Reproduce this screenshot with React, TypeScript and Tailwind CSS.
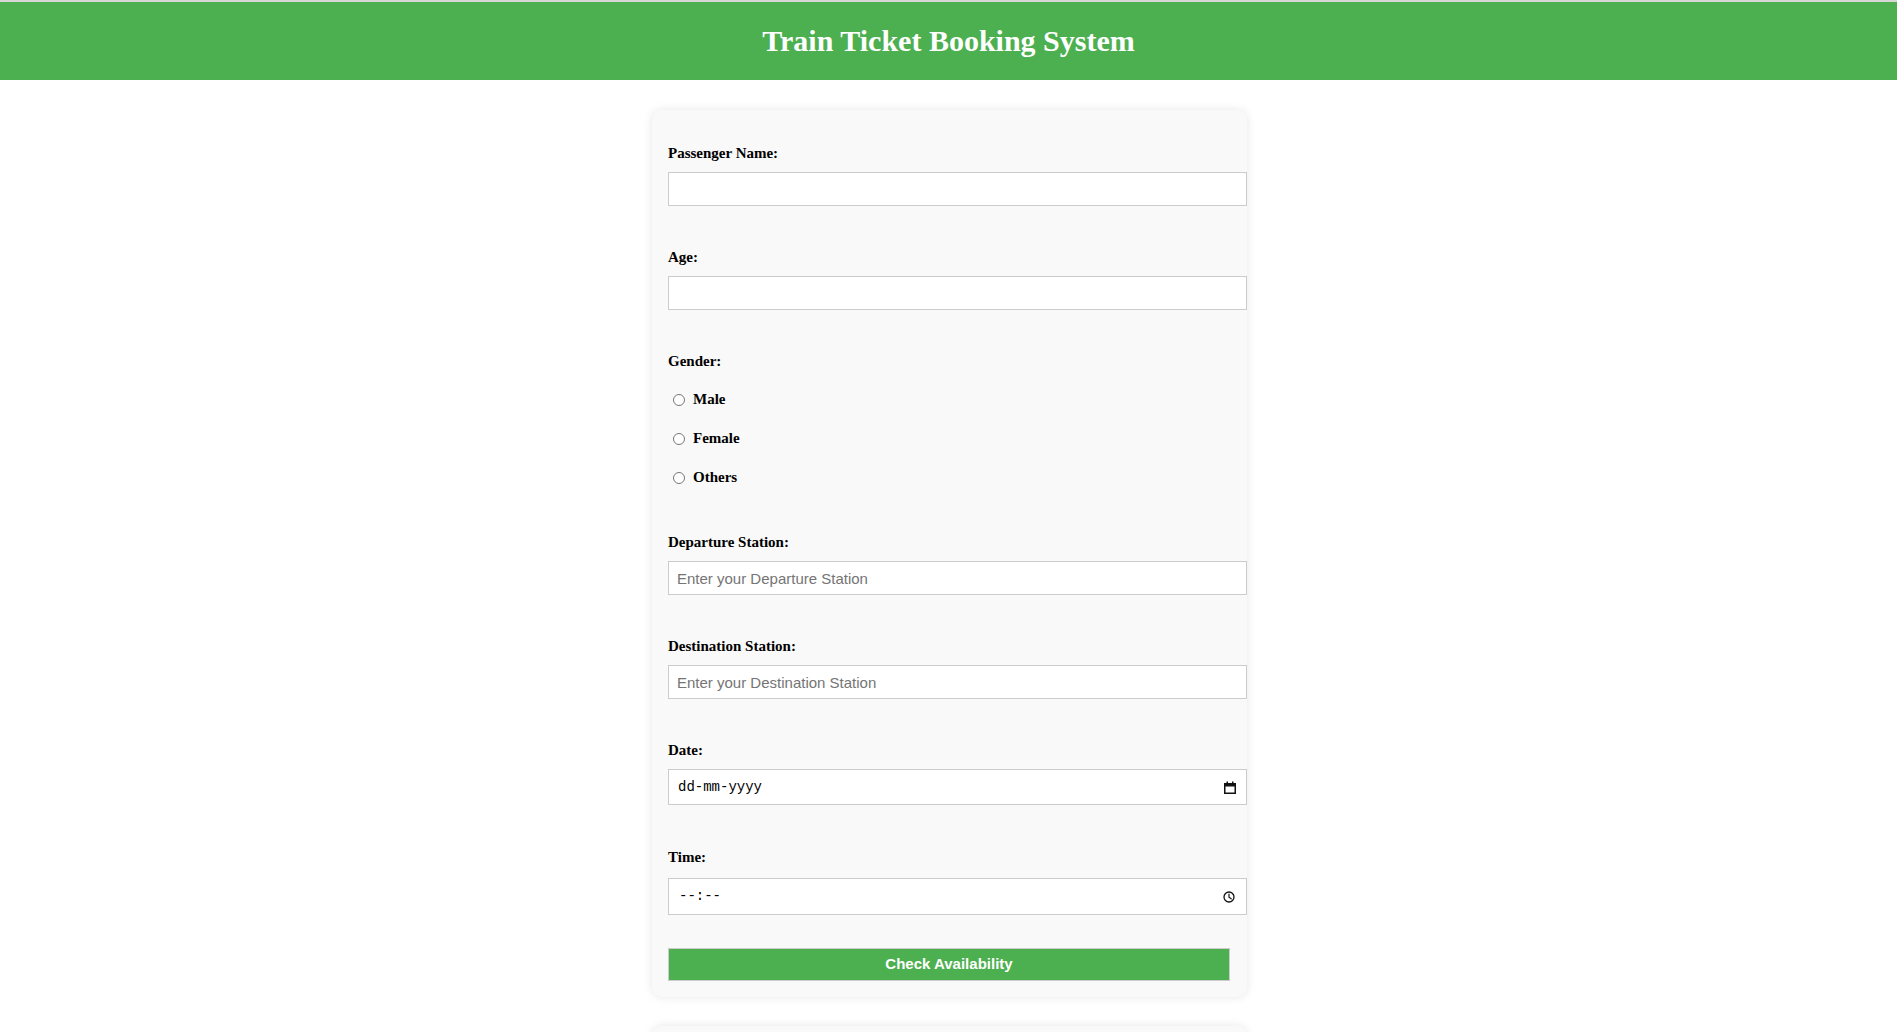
import React from "react";

const serif = { fontFamily: '"Liberation Serif", "Times New Roman", serif' };
const mono = { fontFamily: '"Liberation Mono", "Courier New", monospace' };

function CalendarIcon() {
  return (
    <svg width="12" height="13" viewBox="0 0 12 13" fill="none">
      <rect x="0.75" y="2.75" width="10.5" height="9.5" stroke="#111" strokeWidth="1.5" />
      <rect x="0.5" y="2.5" width="11" height="3" fill="#111" />
      <rect x="2.5" y="0.5" width="1.5" height="2.5" fill="#111" />
      <rect x="8" y="0.5" width="1.5" height="2.5" fill="#111" />
    </svg>
  );
}

function ClockIcon() {
  return (
    <svg width="12" height="12" viewBox="0 0 12 12" fill="none">
      <circle cx="6" cy="6" r="5" stroke="#111" strokeWidth="1.3" />
      <path d="M6 3v3.2l2.2 1.6" stroke="#111" strokeWidth="1.2" strokeLinecap="round" />
    </svg>
  );
}

function Field({
  label,
  children,
  className = "",
  gap = "mt-[10px]",
}: {
  label: string;
  children: React.ReactNode;
  className?: string;
  gap?: string;
}) {
  return (
    <div className={className}>
      <label className="block h-[17px] text-[15px] leading-[17px] font-bold text-black" style={serif}>
        {label}
      </label>
      <div className={gap}>{children}</div>
    </div>
  );
}

function TextBox({ placeholder = "" }: { placeholder?: string }) {
  return (
    <input
      type="text"
      placeholder={placeholder}
      className="block w-[579px] h-[34px] border border-[#cccccc] bg-white px-[8px] text-[15px] text-black placeholder:text-[#757575] outline-none"
      style={{ fontFamily: '"Liberation Sans", Arial, sans-serif' }}
    />
  );
}

export default function App() {
  const genders = ["Male", "Female", "Others"];

  return (
    <div className="min-h-[1032px] bg-white border-t-2 border-[#d6d6d6]">
      {/* Header */}
      <header className="h-[78px] bg-[#4CAF50] flex items-center justify-center">
        <h1 className="text-[30px] font-bold text-white leading-none" style={serif}>
          Train Ticket Booking System
        </h1>
      </header>

      <div className="pl-[2px]">
        {/* Booking form */}
        <form className="mx-auto mt-[30px] w-[595px] rounded-[10px] bg-[#f9f9f9] shadow-[0_0_10px_rgba(0,0,0,0.1)] px-[16px] pt-[35px] pb-[16px]">
          <Field label="Passenger Name:">
            <TextBox />
          </Field>

          <Field label="Age:" className="mt-[43px]">
            <TextBox />
          </Field>

          <div className="mt-[43px]">
            <div className="h-[17px] text-[15px] leading-[17px] font-bold text-black" style={serif}>
              Gender:
            </div>
            <div className="mt-[21px] flex flex-col gap-[22px]">
              {genders.map((g) => (
                <label key={g} className="flex items-center h-[17px] text-[15px] font-bold text-black" style={serif}>
                  <input type="radio" name="gender" className="ml-[5px] mr-[8px] w-[12px] h-[12px]" />
                  {g}
                </label>
              ))}
            </div>
          </div>

          <Field label="Departure Station:" className="mt-[48px]">
            <TextBox placeholder="Enter your Departure Station" />
          </Field>

          <Field label="Destination Station:" className="mt-[43px]">
            <TextBox placeholder="Enter your Destination Station" />
          </Field>

          <Field label="Date:" className="mt-[43px]">
            <div className="flex items-center justify-between w-[579px] h-[36px] border border-[#cccccc] bg-white pl-[9px] pr-[10px]">
              <span className="text-[14px] text-black" style={mono}>
                dd-mm-yyyy
              </span>
              <CalendarIcon />
            </div>
          </Field>

          <Field label="Time:" className="mt-[44px]" gap="mt-[12px]">
            <div className="flex items-center justify-between w-[579px] h-[37px] border border-[#cccccc] bg-white pl-[10px] pr-[11px]">
              <span className="text-[14px] text-black" style={mono}>
                --:--
              </span>
              <ClockIcon />
            </div>
          </Field>

          <button
            type="button"
            className="mt-[33px] block w-[562px] h-[33px] border border-[#cccccc] bg-[#4CAF50] text-white text-[15px] font-bold"
            style={{ fontFamily: '"Liberation Sans", Arial, sans-serif' }}
          >
            Check Availability
          </button>
        </form>

        {/* Result panel (below the fold) */}
        <div className="mx-auto mt-[29px] w-[595px] h-[160px] rounded-[10px] bg-[#f9f9f9] shadow-[0_0_10px_rgba(0,0,0,0.1)]" />
      </div>
    </div>
  );
}
